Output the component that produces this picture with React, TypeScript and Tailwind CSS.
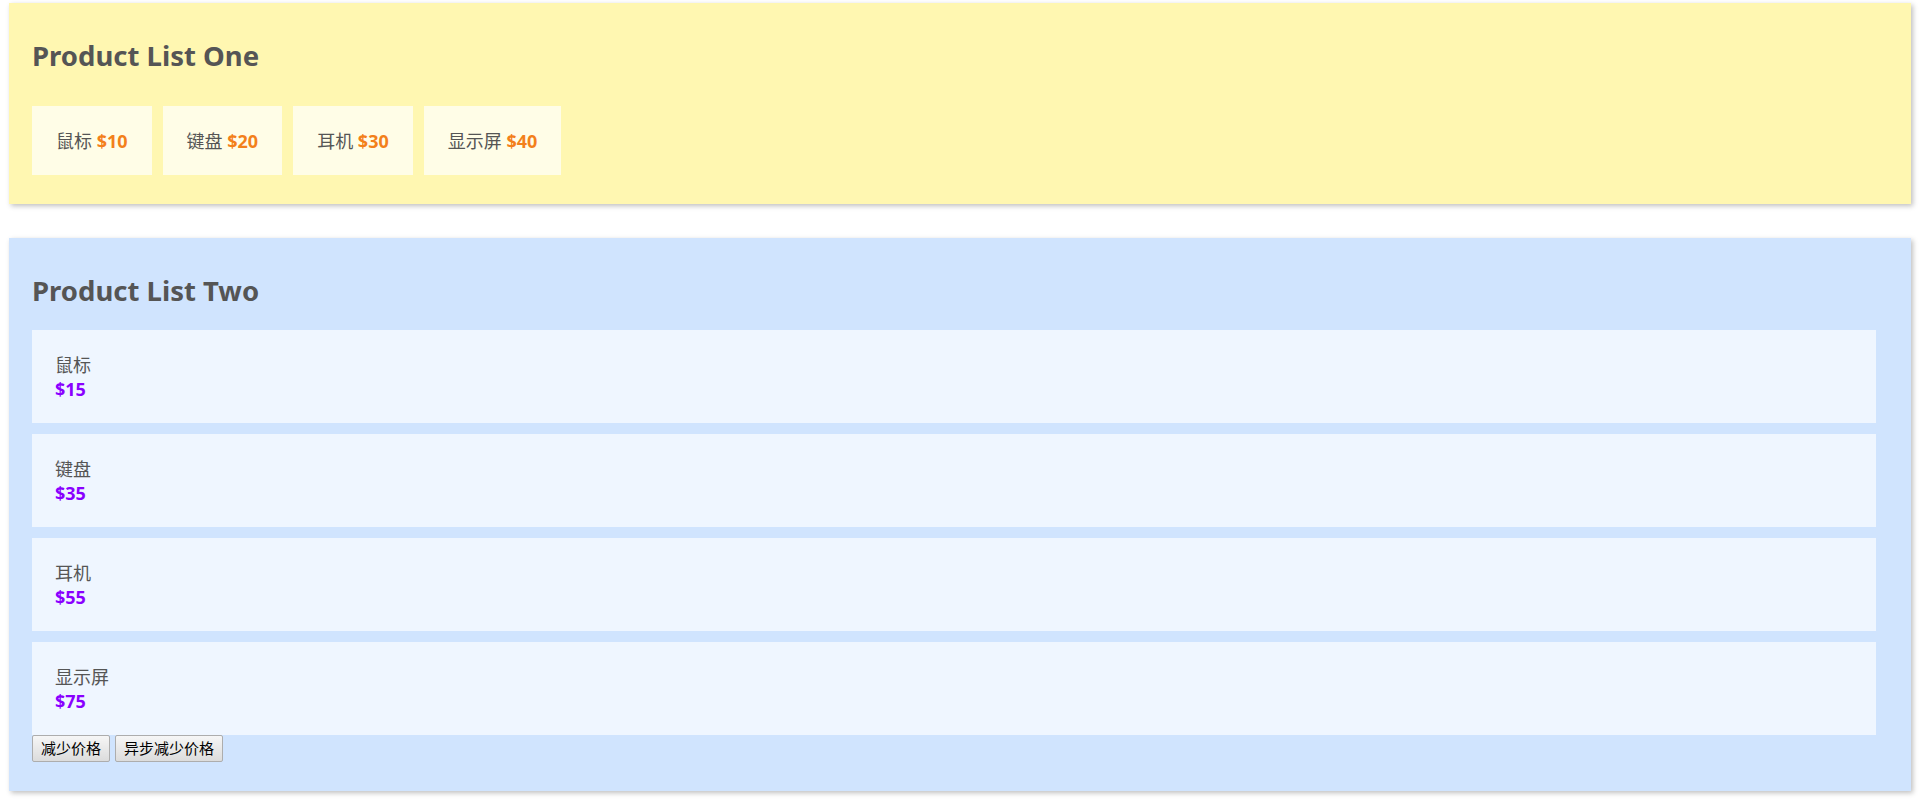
const products = [
  { name: "鼠标", price: 10 },
  { name: "键盘", price: 20 },
  { name: "耳机", price: 30 },
  { name: "显示屏", price: 40 },
];

const productsTwo = [
  { name: "鼠标", price: 15 },
  { name: "键盘", price: 35 },
  { name: "耳机", price: 55 },
  { name: "显示屏", price: 75 },
];

const font = "font-['Noto_Sans','Noto_Sans_CJK_SC',sans-serif]";

function ProductListOne() {
  return (
    <div className="bg-[#fff7b1] px-[23px] pt-8 pb-[29px] shadow-[2px_2px_5px_rgba(0,0,0,0.25)]">
      <h2 className="text-[27.5px] leading-[42px] font-bold text-[#555]">Product List One</h2>
      <ul className="flex gap-[11px] mt-[29px]">
        {products.map((p) => (
          <li key={p.name} className="h-[69px] flex items-center px-6 bg-[#fffde7] text-lg text-[#555]">
            {p.name}&nbsp;<span className="font-bold text-[#f3801a]">${p.price}</span>
          </li>
        ))}
      </ul>
    </div>
  );
}

function ProductListTwo() {
  return (
    <div className="bg-[#d0e4fe] px-[23px] pt-8 pb-[29px] shadow-[2px_2px_5px_rgba(0,0,0,0.25)]">
      <h2 className="text-[27.5px] leading-[42px] font-bold text-[#555]">Product List Two</h2>
      <ul className="flex flex-col gap-[11px] mt-[18px] mr-3">
        {productsTwo.map((p) => (
          <li key={p.name} className="bg-[#eff6ff] px-[23px] pt-[23px] pb-[22px] text-lg leading-6 text-[#555]">
            <div>{p.name}</div>
            <div className="font-bold text-[#8a00ff]">${p.price}</div>
          </li>
        ))}
      </ul>
      <div className="flex gap-[5px]">
        <button className="h-[27px] px-2 border border-[#adadad] rounded-[2px] bg-gradient-to-b from-[#f6f6f6] to-[#dcdcdc] text-[15px] text-black font-['Noto_Sans_CJK_SC',sans-serif]">
          减少价格
        </button>
        <button className="h-[27px] px-2 border border-[#adadad] rounded-[2px] bg-gradient-to-b from-[#f6f6f6] to-[#dcdcdc] text-[15px] text-black font-['Noto_Sans_CJK_SC',sans-serif]">
          异步减少价格
        </button>
      </div>
    </div>
  );
}

export default function App() {
  return (
    <div className={`${font} bg-white min-h-[799px] pl-[9px] pr-2 pt-[3px] flex flex-col gap-[34px]`}>
      <ProductListOne />
      <ProductListTwo />
    </div>
  );
}
